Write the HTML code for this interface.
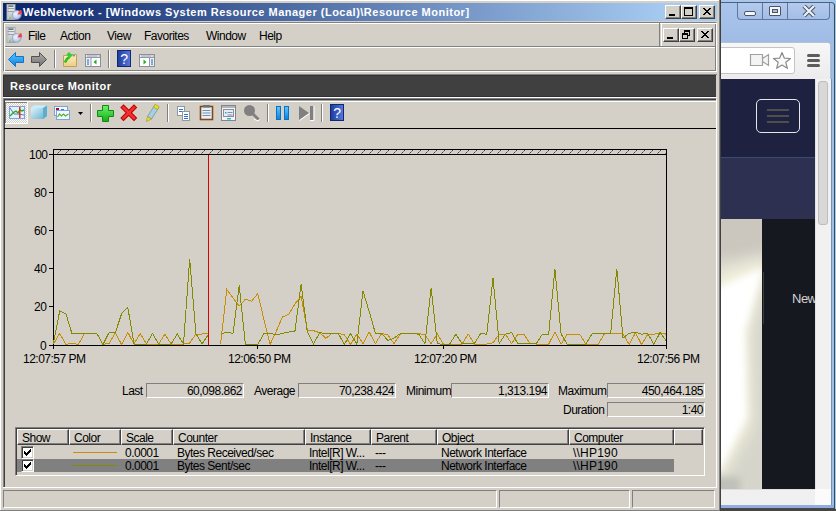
<!DOCTYPE html>
<html><head><meta charset="utf-8">
<style>
*{box-sizing:border-box}
html,body{margin:0;padding:0}
body{width:836px;height:511px;overflow:hidden;position:relative;background:#d4d0c8;font-family:"Liberation Sans",sans-serif;font-size:12px;letter-spacing:-0.5px;color:#000}
.a{position:absolute}
.t{position:absolute;white-space:nowrap;line-height:13px;margin-top:1px}
.cb{position:absolute;width:16px;height:14px;background:#d4d0c8;border-top:1px solid #fff;border-left:1px solid #fff;border-right:1px solid #404040;border-bottom:1px solid #404040;box-shadow:inset -1px -1px 0 #808080}
.sep{position:absolute;width:2px;border-left:1px solid #808080;border-right:1px solid #fff}
.box{position:absolute;height:15px;border-top:1px solid #808080;border-left:1px solid #808080;border-right:1px solid #fff;border-bottom:1px solid #fff;text-align:right;padding-right:1px;line-height:14px}
.hd{position:absolute;top:429px;height:16px;border-top:1px solid #fff;border-left:1px solid #fff;border-right:1px solid #404040;border-bottom:1px solid #404040;box-shadow:inset -1px -1px 0 #808080;padding-left:4px;line-height:17px}
.chk{position:absolute;width:13px;height:13px;background:#fff;border-top:1px solid #808080;border-left:1px solid #808080;border-right:1px solid #fff;border-bottom:1px solid #fff;box-shadow:inset 1px 1px 0 #404040,inset -1px -1px 0 #d4d0c8}
</style></head><body>

<!-- ===== MMC window frame ===== -->
<div class="a" style="left:0;top:0;width:719px;height:1px;background:#fff"></div>
<div class="a" style="left:0;top:0;width:1px;height:510px;background:#fff"></div>
<div class="a" style="left:719px;top:0;width:1px;height:511px;background:#808080"></div>
<div class="a" style="left:0;top:510px;width:719px;height:1px;background:#808080"></div>

<!-- title bar -->
<div class="a" style="left:3px;top:3px;width:714px;height:18px;background:linear-gradient(to right,#0a246a,#a6caf0 93%)"></div>
<div class="t" style="left:23px;top:5px;color:#fff;font-weight:bold;font-size:11px;letter-spacing:0.5px">WebNetwork - [Windows System Resource Manager (Local)\Resource Monitor]</div>
<div class="cb" style="left:665px;top:5px"></div>
<div class="cb" style="left:681px;top:5px"></div>
<div class="cb" style="left:699px;top:5px"></div>

<!-- menu + toolbar etched box -->
<div class="a" style="left:3px;top:22px;width:714px;height:50px;border-top:1px solid #808080;border-left:1px solid #808080;border-right:1px solid #fff;border-bottom:1px solid #fff;box-shadow:inset 1px 1px 0 #fff,inset -1px -1px 0 #808080"></div>
<div class="a" style="left:5px;top:46px;width:710px;height:2px;border-top:1px solid #808080;border-bottom:1px solid #fff"></div>

<div class="t" style="left:28px;top:29px">File</div>
<div class="t" style="left:60px;top:29px">Action</div>
<div class="t" style="left:107px;top:29px">View</div>
<div class="t" style="left:144px;top:29px">Favorites</div>
<div class="t" style="left:206px;top:29px">Window</div>
<div class="t" style="left:259px;top:29px">Help</div>

<div class="a" style="left:659px;top:23px;width:1px;height:23px;background:#808080"></div>
<div class="a" style="left:661px;top:23px;width:1px;height:23px;background:#fff"></div>
<div class="cb" style="left:663px;top:28px"></div>
<div class="cb" style="left:679px;top:28px"></div>
<div class="cb" style="left:697px;top:28px"></div>

<div class="sep" style="left:54px;top:50px;height:18px"></div>
<div class="sep" style="left:108px;top:50px;height:18px"></div>

<!-- dark band -->
<div class="a" style="left:3px;top:74px;width:714px;height:1px;background:#808080"></div>
<div class="a" style="left:3px;top:75px;width:713px;height:22px;background:#404040;border-top:1px solid #343434;border-bottom:1px solid #303030;border-left:1px solid #303030"></div>
<div class="t" style="left:10px;top:79px;color:#fff;font-weight:bold;font-size:11px;letter-spacing:0.5px">Resource Monitor</div>
<div class="a" style="left:3px;top:97px;width:714px;height:1px;background:#fff"></div>

<!-- toolbar2 -->
<div class="a" style="left:3px;top:98px;width:713px;height:1px;background:#808080"></div>
<div class="a" style="left:3px;top:99px;width:713px;height:1px;background:#404040"></div>
<div class="a" style="left:3px;top:100px;width:713px;height:1px;background:#a0a0a0"></div>
<div class="a" style="left:3px;top:101px;width:713px;height:1px;background:#fff"></div>
<div class="sep" style="left:90px;top:104px;height:18px"></div>
<div class="sep" style="left:167px;top:104px;height:18px"></div>
<div class="sep" style="left:267px;top:104px;height:18px"></div>
<div class="sep" style="left:321px;top:104px;height:18px"></div>

<!-- chart panel -->
<div class="a" style="left:3px;top:99px;width:1px;height:389px;background:#808080"></div>
<div class="a" style="left:4px;top:99px;width:1px;height:388px;background:#404040"></div>
<div class="a" style="left:4px;top:128px;width:712px;height:1px;background:#000"></div>
<div class="a" style="left:716px;top:99px;width:1px;height:389px;background:#fff"></div>
<div class="a" style="left:3px;top:487px;width:714px;height:1px;background:#fff"></div>

<!-- chart svg -->
<svg class="a" style="left:0;top:0" width="836" height="511">
<defs><pattern id="hatch" width="8" height="4" patternUnits="userSpaceOnUse" x="1" y="150"><rect x="3" y="0" width="1" height="1" fill="#404040"/><rect x="2" y="1" width="1" height="1" fill="#808080"/><rect x="1" y="2" width="1" height="1" fill="#404040"/><rect x="0" y="3" width="1" height="1" fill="#808080"/></pattern></defs>
<rect x="54" y="150" width="612" height="4" fill="url(#hatch)" shape-rendering="crispEdges"/>
<g shape-rendering="crispEdges">
<rect x="53" y="149" width="614" height="1" fill="#000"/>
<rect x="53" y="154" width="614" height="1" fill="#000"/>
<rect x="53" y="149" width="1" height="197" fill="#000"/>
<rect x="666" y="149" width="1" height="197" fill="#000"/>
<rect x="49" y="345" width="618" height="1" fill="#000"/>
<rect x="49" y="154" width="4" height="1" fill="#000"/>
<rect x="49" y="192" width="4" height="1" fill="#000"/>
<rect x="49" y="230" width="4" height="1" fill="#000"/>
<rect x="49" y="268" width="4" height="1" fill="#000"/>
<rect x="49" y="306" width="4" height="1" fill="#000"/>
<rect x="53" y="346" width="1" height="3" fill="#000"/>
<rect x="257" y="346" width="1" height="3" fill="#000"/>
<rect x="443" y="346" width="1" height="3" fill="#000"/>
<rect x="666" y="346" width="1" height="3" fill="#000"/>
</g>
<polyline fill="none" stroke="#c98e08" stroke-width="1" shape-rendering="crispEdges" points="53.5,344.0 59.7,333.3 65.9,344.5 72.1,343.2 78.3,344.5 84.5,333.4 90.6,333.4 96.8,333.4 103.0,344.5 109.2,343.2 115.4,332.8 121.6,344.5 127.8,332.3 134.0,344.0 140.2,333.5 146.4,344.0 152.5,344.0 158.7,344.0 164.9,334.0 171.1,344.0 177.3,344.0 183.5,344.0 189.7,343.0 195.9,334.0 202.1,334.0 208.2,333.2"/>
<polyline fill="none" stroke="#c98e08" stroke-width="1" shape-rendering="crispEdges" points="220.6,343.7 226.8,289.6 233.0,298.0 239.2,306.0 245.4,299.2 251.6,301.2 257.8,293.7 264.0,319.7 270.1,344.4 276.3,331.0 282.5,317.0 288.7,314.2 294.9,304.0 301.1,296.4 307.3,330.0 313.5,330.7 319.7,332.7 325.9,338.2 332.1,333.4 338.2,333.4 344.4,334.8 350.6,344.4 356.8,334.1 363.0,343.7 369.2,332.0 375.4,343.7 381.6,333.4 387.8,334.8 394.0,343.7 400.1,334.1 406.3,333.4 412.5,333.4 418.7,333.4 424.9,334.8 431.1,343.7 437.3,334.1 443.5,344.4 449.7,344.0 455.9,344.0 462.0,344.0 468.2,334.0 474.4,344.0 480.6,344.0 486.8,344.0 493.0,342.8 499.2,334.2 505.4,334.2 511.6,343.6 517.8,334.2 523.9,334.2 530.1,343.6 536.3,344.0 542.5,344.0 548.7,344.0 554.9,332.2 561.1,344.2 567.3,334.0 573.5,334.0 579.6,334.0 585.8,344.2 592.0,344.2 598.2,344.2 604.4,334.0 610.6,333.0 616.8,333.0 623.0,334.0 629.2,344.5 635.4,332.8 641.6,344.5 647.7,334.2 653.9,334.2 660.1,332.8 666.3,334.2"/>
<polyline fill="none" stroke="#848a00" stroke-width="1" shape-rendering="crispEdges" points="53.5,343.0 59.7,311.0 65.9,313.7 72.1,334.0 78.3,333.4 84.5,333.4 90.6,333.4 96.8,333.4 103.0,344.5 109.2,332.3 115.4,332.5 121.6,313.7 127.8,307.3 134.0,344.0 140.2,344.0 146.4,344.0 152.5,333.5 158.7,344.0 164.9,344.0 171.1,344.0 177.3,334.0 183.5,344.0 189.7,259.0 195.9,333.5 202.1,344.0 208.2,334.8"/>
<polyline fill="none" stroke="#848a00" stroke-width="1" shape-rendering="crispEdges" points="220.6,334.5 226.8,332.0 233.0,333.4 239.2,285.5 245.4,344.4 251.6,344.4 257.8,344.4 264.0,333.4 270.1,333.4 276.3,334.8 282.5,333.4 288.7,332.0 294.9,331.4 301.1,284.1 307.3,332.0 313.5,343.7 319.7,332.7 325.9,333.4 332.1,333.4 338.2,333.4 344.4,344.4 350.6,333.4 356.8,344.4 363.0,291.0 369.2,311.5 375.4,333.4 381.6,333.4 387.8,340.3 394.0,338.2 400.1,333.7 406.3,333.7 412.5,333.7 418.7,334.1 424.9,343.7 431.1,288.2 437.3,343.7 443.5,344.4 449.7,344.0 455.9,334.2 462.0,343.6 468.2,344.0 474.4,343.6 480.6,333.4 486.8,334.2 493.0,277.8 499.2,343.6 505.4,334.2 511.6,332.6 517.8,343.6 523.9,343.6 530.1,343.6 536.3,343.6 542.5,334.0 548.7,334.0 554.9,268.8 561.1,334.0 567.3,344.2 573.5,344.2 579.6,344.2 585.8,344.2 592.0,334.0 598.2,333.0 604.4,333.0 610.6,334.0 616.8,268.8 623.0,338.0 629.2,333.3 635.4,332.3 641.6,334.2 647.7,333.3 653.9,344.5 660.1,332.3 666.3,341.1"/>
<rect x="208" y="155" width="1" height="190" fill="#e00000" shape-rendering="crispEdges"/>
</svg>
<div class="t" style="left:29px;top:148px">100</div>
<div class="t" style="left:34px;top:186px">80</div>
<div class="t" style="left:34px;top:224px">60</div>
<div class="t" style="left:34px;top:262px">40</div>
<div class="t" style="left:34px;top:300px">20</div>
<div class="t" style="left:40px;top:339px">0</div>
<div class="t" style="left:23px;top:352px">12:07:57 PM</div>
<div class="t" style="left:228px;top:352px">12:06:50 PM</div>
<div class="t" style="left:414px;top:352px">12:07:20 PM</div>
<div class="t" style="left:637px;top:352px">12:07:56 PM</div>

<!-- stats -->
<div class="t" style="left:122px;top:384px">Last</div>
<div class="box" style="left:146px;top:383px;width:98px">60,098.862</div>
<div class="t" style="left:254px;top:384px">Average</div>
<div class="box" style="left:298px;top:383px;width:98px">70,238.424</div>
<div class="t" style="left:406px;top:384px">Minimum</div>
<div class="box" style="left:451px;top:383px;width:98px">1,313.194</div>
<div class="t" style="left:558px;top:384px">Maximum</div>
<div class="box" style="left:607px;top:383px;width:98px">450,464.185</div>
<div class="t" style="left:563px;top:403px">Duration</div>
<div class="box" style="left:607px;top:402px;width:98px">1:40</div>

<!-- list view -->
<div class="a" style="left:15px;top:427px;width:690px;height:49px;border-top:1px solid #808080;border-left:1px solid #808080;border-right:1px solid #fff;border-bottom:1px solid #fff;box-shadow:inset 1px 1px 0 #404040,inset -1px -1px 0 #d4d0c8"></div>
<div class="hd" style="left:17px;width:52px">Show</div>
<div class="hd" style="left:69px;width:52px">Color</div>
<div class="hd" style="left:121px;width:52px">Scale</div>
<div class="hd" style="left:173px;width:132px">Counter</div>
<div class="hd" style="left:305px;width:66px">Instance</div>
<div class="hd" style="left:371px;width:66px">Parent</div>
<div class="hd" style="left:437px;width:132px">Object</div>
<div class="hd" style="left:569px;width:105px">Computer</div>
<div class="hd" style="left:674px;width:29px"></div>
<div class="a" style="left:17px;top:459px;width:657px;height:13px;background:#808080"></div>
<div class="chk" style="left:21px;top:446px"></div>
<div class="chk" style="left:21px;top:459px"></div>
<div class="a" style="left:73px;top:452px;width:44px;height:1px;background:#c98e08"></div>
<div class="a" style="left:73px;top:465px;width:44px;height:1px;background:#848a00"></div>
<div class="t" style="left:125px;top:446px">0.0001</div>
<div class="t" style="left:177px;top:446px">Bytes Received/sec</div>
<div class="t" style="left:309px;top:446px">Intel[R] W...</div>
<div class="t" style="left:375px;top:446px">---</div>
<div class="t" style="left:441px;top:446px">Network Interface</div>
<div class="t" style="left:573px;top:446px;letter-spacing:0.2px">\\HP190</div>
<div class="t" style="left:125px;top:459px">0.0001</div>
<div class="t" style="left:177px;top:459px">Bytes Sent/sec</div>
<div class="t" style="left:309px;top:459px">Intel[R] W...</div>
<div class="t" style="left:375px;top:459px">---</div>
<div class="t" style="left:441px;top:459px">Network Interface</div>
<div class="t" style="left:573px;top:459px;letter-spacing:0.2px">\\HP190</div>

<!-- status bar -->
<div class="a" style="left:3px;top:490px;width:494px;height:18px;border-top:1px solid #808080;border-left:1px solid #808080;border-right:1px solid #fff;border-bottom:1px solid #fff"></div>
<div class="a" style="left:499px;top:490px;width:131px;height:18px;border-top:1px solid #808080;border-left:1px solid #808080;border-right:1px solid #fff;border-bottom:1px solid #fff"></div>
<div class="a" style="left:632px;top:490px;width:83px;height:18px;border-top:1px solid #808080;border-left:1px solid #808080;border-right:1px solid #fff;border-bottom:1px solid #fff"></div>

<svg class="a" style="left:0;top:0" width="836" height="511"><g shape-rendering="crispEdges">
<rect x="669" y="14" width="6" height="1" fill="#000"/><rect x="669" y="15" width="6" height="1" fill="#000"/>
<rect x="684" y="7" width="9" height="1" fill="#000"/><rect x="684" y="8" width="9" height="1" fill="#000"/><rect x="684" y="9" width="1" height="1" fill="#000"/><rect x="692" y="9" width="1" height="1" fill="#000"/><rect x="684" y="10" width="1" height="1" fill="#000"/><rect x="692" y="10" width="1" height="1" fill="#000"/><rect x="684" y="11" width="1" height="1" fill="#000"/><rect x="692" y="11" width="1" height="1" fill="#000"/><rect x="684" y="12" width="1" height="1" fill="#000"/><rect x="692" y="12" width="1" height="1" fill="#000"/><rect x="684" y="13" width="1" height="1" fill="#000"/><rect x="692" y="13" width="1" height="1" fill="#000"/><rect x="684" y="14" width="1" height="1" fill="#000"/><rect x="692" y="14" width="1" height="1" fill="#000"/><rect x="684" y="15" width="9" height="1" fill="#000"/>
<rect x="703" y="8" width="2" height="1" fill="#000"/><rect x="709" y="8" width="2" height="1" fill="#000"/><rect x="704" y="9" width="2" height="1" fill="#000"/><rect x="708" y="9" width="2" height="1" fill="#000"/><rect x="705" y="10" width="4" height="1" fill="#000"/><rect x="706" y="11" width="2" height="1" fill="#000"/><rect x="705" y="12" width="4" height="1" fill="#000"/><rect x="704" y="13" width="2" height="1" fill="#000"/><rect x="708" y="13" width="2" height="1" fill="#000"/><rect x="703" y="14" width="2" height="1" fill="#000"/><rect x="709" y="14" width="2" height="1" fill="#000"/>
<rect x="667" y="37" width="6" height="1" fill="#000"/><rect x="667" y="38" width="6" height="1" fill="#000"/>
<rect x="684" y="30" width="6" height="1" fill="#000"/><rect x="684" y="31" width="6" height="1" fill="#000"/><rect x="684" y="32" width="1" height="1" fill="#000"/><rect x="689" y="32" width="1" height="1" fill="#000"/><rect x="682" y="33" width="6" height="1" fill="#000"/><rect x="689" y="33" width="1" height="1" fill="#000"/><rect x="682" y="34" width="6" height="1" fill="#000"/><rect x="689" y="34" width="1" height="1" fill="#000"/><rect x="682" y="35" width="1" height="1" fill="#000"/><rect x="687" y="35" width="3" height="1" fill="#000"/><rect x="682" y="36" width="1" height="1" fill="#000"/><rect x="687" y="36" width="1" height="1" fill="#000"/><rect x="682" y="37" width="1" height="1" fill="#000"/><rect x="687" y="37" width="1" height="1" fill="#000"/><rect x="682" y="38" width="6" height="1" fill="#000"/>
<rect x="701" y="31" width="2" height="1" fill="#000"/><rect x="707" y="31" width="2" height="1" fill="#000"/><rect x="702" y="32" width="2" height="1" fill="#000"/><rect x="706" y="32" width="2" height="1" fill="#000"/><rect x="703" y="33" width="4" height="1" fill="#000"/><rect x="704" y="34" width="2" height="1" fill="#000"/><rect x="703" y="35" width="4" height="1" fill="#000"/><rect x="702" y="36" width="2" height="1" fill="#000"/><rect x="706" y="36" width="2" height="1" fill="#000"/><rect x="701" y="37" width="2" height="1" fill="#000"/><rect x="707" y="37" width="2" height="1" fill="#000"/>
<rect x="30" y="449" width="1" height="1" fill="#000"/><rect x="29" y="450" width="2" height="1" fill="#000"/><rect x="24" y="451" width="1" height="1" fill="#000"/><rect x="28" y="451" width="3" height="1" fill="#000"/><rect x="24" y="452" width="2" height="1" fill="#000"/><rect x="27" y="452" width="3" height="1" fill="#000"/><rect x="24" y="453" width="5" height="1" fill="#000"/><rect x="25" y="454" width="3" height="1" fill="#000"/><rect x="26" y="455" width="1" height="1" fill="#000"/>
<rect x="30" y="462" width="1" height="1" fill="#000"/><rect x="29" y="463" width="2" height="1" fill="#000"/><rect x="24" y="464" width="1" height="1" fill="#000"/><rect x="28" y="464" width="3" height="1" fill="#000"/><rect x="24" y="465" width="2" height="1" fill="#000"/><rect x="27" y="465" width="3" height="1" fill="#000"/><rect x="24" y="466" width="5" height="1" fill="#000"/><rect x="25" y="467" width="3" height="1" fill="#000"/><rect x="26" y="468" width="1" height="1" fill="#000"/>
</g>
<defs>
<linearGradient id="srvg" x1="0" y1="0" x2="0" y2="1"><stop offset="0" stop-color="#f4f6f8"/><stop offset="0.5" stop-color="#d8dce0"/><stop offset="1" stop-color="#a8b0b8"/></linearGradient>
<radialGradient id="dskg" cx="0.4" cy="0.4" r="0.7"><stop offset="0" stop-color="#f0f4fc"/><stop offset="0.6" stop-color="#c4d0ea"/><stop offset="1" stop-color="#98a8d0"/></radialGradient><linearGradient id="pieg" x1="0" y1="0" x2="1" y2="1"><stop offset="0" stop-color="#ffb020"/><stop offset="0.5" stop-color="#f04040"/><stop offset="1" stop-color="#e040c0"/></linearGradient>
<linearGradient id="blug" x1="0" y1="0" x2="0" y2="1"><stop offset="0" stop-color="#5cc8ff"/><stop offset="1" stop-color="#0a80e0"/></linearGradient>
<linearGradient id="gryg" x1="0" y1="0" x2="0" y2="1"><stop offset="0" stop-color="#b0b0b0"/><stop offset="1" stop-color="#707070"/></linearGradient>
<linearGradient id="hlpg" x1="0" y1="0" x2="1" y2="0"><stop offset="0" stop-color="#1c3c9c"/><stop offset="1" stop-color="#5878e0"/></linearGradient>
<linearGradient id="grng" x1="0" y1="0" x2="0" y2="1"><stop offset="0" stop-color="#70f070"/><stop offset="1" stop-color="#10b010"/></linearGradient>
<linearGradient id="cubg" x1="0" y1="0" x2="1" y2="1"><stop offset="0" stop-color="#e8f8ff"/><stop offset="1" stop-color="#60b0d0"/></linearGradient>
</defs>
<g transform="translate(4,4)">
<rect x="3" y="0.5" width="8" height="15" fill="url(#srvg)" stroke="#a0a6ae" stroke-width="1"/>
<rect x="3.5" y="1" width="1.5" height="14" fill="#c8ccd2"/>
<rect x="4.5" y="1.5" width="5" height="1.2" fill="#2c5058"/>
<rect x="3.5" y="4" width="7" height="1" fill="#9aa0a8"/>
<rect x="3.5" y="7" width="7" height="1" fill="#9aa0a8"/>
<rect x="5" y="13.5" width="1.3" height="1.3" fill="#30e030"/>
<circle cx="12.7" cy="10.9" r="4.4" fill="url(#dskg)" stroke="#90a0c4" stroke-width="0.8"/>
<path d="M13.4,10.6 L16,6 L17.6,6.6 L18.2,10.2 Z" fill="url(#pieg)"/>
</g>
<g transform="translate(4,27)">
<rect x="3" y="0.5" width="8" height="15" fill="url(#srvg)" stroke="#a0a6ae" stroke-width="1"/>
<rect x="3.5" y="1" width="1.5" height="14" fill="#c8ccd2"/>
<rect x="4.5" y="1.5" width="5" height="1.2" fill="#2c5058"/>
<rect x="3.5" y="4" width="7" height="1" fill="#9aa0a8"/>
<rect x="3.5" y="7" width="7" height="1" fill="#9aa0a8"/>
<rect x="5" y="13.5" width="1.3" height="1.3" fill="#30e030"/>
<circle cx="12.7" cy="10.9" r="4.4" fill="url(#dskg)" stroke="#90a0c4" stroke-width="0.8"/>
<path d="M13.4,10.6 L16,6 L17.6,6.6 L18.2,10.2 Z" fill="url(#pieg)"/>
</g>
<path d="M8.5,59.5 L15.5,52.5 L15.5,56.5 L23.5,56.5 L23.5,62.5 L15.5,62.5 L15.5,66.5 Z" fill="url(#blug)" stroke="#1870c8" stroke-width="1" stroke-linejoin="miter"/>
<path d="M46.5,59.5 L39.5,52.5 L39.5,56.5 L31.5,56.5 L31.5,62.5 L39.5,62.5 L39.5,66.5 Z" fill="url(#gryg)" stroke="#505050" stroke-width="1"/>
<linearGradient id="fldg" x1="0" y1="0" x2="0" y2="1"><stop offset="0" stop-color="#fcecc0"/><stop offset="1" stop-color="#ecd080"/></linearGradient>
<path d="M63.5,55.5 L67.5,55.5 L68.5,54.5 L76.5,54.5 L76.5,66.5 L63.5,66.5 Z" fill="url(#fldg)" stroke="#c8a050" stroke-width="1"/>
<rect x="64" y="57.5" width="12" height="1" fill="#f8e4a8"/>
<ellipse cx="73.8" cy="55.7" rx="1.4" ry="0.8" fill="#4090e0"/>
<path d="M65,62.5 C66,59.5 67.5,58 69.5,57" fill="none" stroke="#28c028" stroke-width="2.6"/>
<path d="M66.5,54.5 L69,52 L72.5,55.5 L70,58 Z" fill="#30d030"/>
<rect x="85.5" y="54.5" width="15" height="12" fill="#fff" stroke="#8890a0"/><rect x="86" y="55" width="14" height="2.5" fill="#f0f2f4"/><rect x="87" y="55.5" width="10" height="1" fill="#9098a8"/><rect x="97.5" y="55.5" width="1" height="1" fill="#9098a8"/><rect x="99" y="55.5" width="1" height="1" fill="#9098a8"/><rect x="86" y="57" width="14" height="1" fill="#9098a8"/><rect x="86" y="58" width="5" height="8" fill="#f0f0f0"/><rect x="90.5" y="58" width="1" height="8" fill="#9098a8"/><rect x="87" y="59.5" width="2" height="1.2" fill="#3878d0"/><rect x="87" y="61.5" width="2" height="1.2" fill="#3878d0"/><rect x="87" y="63.5" width="2" height="1.2" fill="#3878d0"/><path d="M96.5,59.5 L93.5,62 L96.5,64.5 Z" fill="#20b020"/>
<rect x="139.5" y="54.5" width="15" height="12" fill="#fff" stroke="#8890a0"/><rect x="140" y="55" width="14" height="2.5" fill="#f0f2f4"/><rect x="141" y="55.5" width="10" height="1" fill="#9098a8"/><rect x="151.5" y="55.5" width="1" height="1" fill="#9098a8"/><rect x="153" y="55.5" width="1" height="1" fill="#9098a8"/><rect x="140" y="57" width="14" height="1" fill="#9098a8"/><rect x="149" y="58" width="5" height="8" fill="#f0f0f0"/><rect x="149" y="58" width="1" height="8" fill="#9098a8"/><rect x="151" y="59.5" width="2" height="1.2" fill="#3878d0"/><rect x="151" y="61.5" width="2" height="1.2" fill="#3878d0"/><rect x="151" y="63.5" width="2" height="1.2" fill="#3878d0"/><path d="M143.5,59.5 L146.5,62 L143.5,64.5 Z" fill="#20b020"/>
<rect x="117.5" y="50.5" width="13" height="16" fill="url(#hlpg)" stroke="#102870"/>
<text x="124" y="63.5" font-family="Liberation Sans" font-size="14" fill="#fff" text-anchor="middle">?</text>
<rect x="330.5" y="104.5" width="13" height="16" fill="url(#hlpg)" stroke="#102870"/>
<text x="337" y="117.5" font-family="Liberation Sans" font-size="14" fill="#fff" text-anchor="middle">?</text>
<pattern id="dith" width="2" height="2" patternUnits="userSpaceOnUse"><rect width="2" height="2" fill="#d4d0c8"/><rect width="1" height="1" fill="#fff"/><rect x="1" y="1" width="1" height="1" fill="#fff"/></pattern>
<rect x="5" y="102" width="23" height="22" fill="url(#dith)" shape-rendering="crispEdges"/>
<rect x="5" y="102" width="22" height="1" fill="#808080" shape-rendering="crispEdges"/>
<rect x="5" y="102" width="1" height="21" fill="#808080" shape-rendering="crispEdges"/>
<rect x="5" y="123" width="23" height="1" fill="#fff" shape-rendering="crispEdges"/>
<rect x="27" y="102" width="1" height="22" fill="#fff" shape-rendering="crispEdges"/>
<rect x="9.5" y="106.5" width="15" height="12" fill="#e4f0fc" stroke="#7ca4dc"/>
<polyline points="10,108 14,114 18,114 24,115" fill="none" stroke="#5878d0" stroke-width="1"/>
<polyline points="10,116 12,114 14,112 16,111 18,113 20,110 22,111 24,110" fill="none" stroke="#20b020" stroke-width="1.4"/>
<rect x="19" y="107" width="1.5" height="11" fill="#e03020"/>
<path d="M31,108 L34,105.5 L47,105.5 L47,116 L43,119 L31,119 Z" fill="url(#cubg)"/>
<path d="M31,108 L34,105.5 L47,105.5 L43,108 Z" fill="#c8ecfc"/>
<path d="M43,108 L47,105.5 L47,116 L43,119 Z" fill="#5aaed0"/>
<rect x="54.5" y="106.5" width="13" height="9" fill="#f4f8fc" stroke="#7ca4dc"/>
<rect x="56" y="108" width="3" height="2" fill="#a01020"/><rect x="61" y="109" width="3" height="1.5" fill="#4070e0"/>
<rect x="56.5" y="110.5" width="13" height="9" fill="#f4f8fc" stroke="#7ca4dc"/>
<polyline points="57.5,117 59.5,114 61.5,116 63.5,114 65.5,116 68.5,114" fill="none" stroke="#50b030" stroke-width="1.2"/>
<path d="M78,112 L83,112 L80.5,115 Z" fill="#000"/>
<path d="M102.5,105.5 H108.5 V110.5 H113.5 V116.5 H108.5 V121.5 H102.5 V116.5 H97.5 V110.5 H102.5 Z" fill="url(#grng)" stroke="#108a10"/>
<path d="M123.5,107.5 L134,118 M134,107.5 L123.5,118" stroke="#c00000" stroke-width="4.6" stroke-linecap="square"/><path d="M123.5,107.5 L134,118 M134,107.5 L123.5,118" stroke="#f03030" stroke-width="2.6" stroke-linecap="square"/>
<path d="M147.5,116.5 L154.5,105.5 L158.5,108 L151.5,119 Z" fill="#a8d0dc" stroke="#6898a8" stroke-width="0.8"/>
<path d="M153.5,107 L155.2,104.3 L159.2,106.8 L157.5,109.5 Z" fill="#e8e020" stroke="#a09010" stroke-width="0.6"/>
<path d="M147.5,116.5 L151.5,119 L146.5,121.5 Z" fill="#e8e020" stroke="#a09010" stroke-width="0.6"/>
<rect x="177.5" y="106.5" width="7" height="9" fill="#fff" stroke="#9098a0"/>
<rect x="179" y="109" width="4" height="1" fill="#3070d0"/><rect x="179" y="111" width="4" height="1" fill="#3070d0"/>
<rect x="182.5" y="111.5" width="7" height="9" fill="#fff" stroke="#9098a0"/>
<rect x="184" y="114" width="4" height="1" fill="#3070d0"/><rect x="184" y="116" width="4" height="1" fill="#3070d0"/><rect x="184" y="118" width="4" height="1" fill="#3070d0"/>
<rect x="200.5" y="106.5" width="12" height="13" fill="#e8f0f8" stroke="#804818" stroke-width="1.6"/>
<rect x="203" y="105" width="7" height="2.5" fill="#707070"/>
<rect x="202.5" y="110" width="8" height="1" fill="#7090b0"/><rect x="202.5" y="112.5" width="8" height="1" fill="#7090b0"/><rect x="202.5" y="115" width="8" height="1" fill="#7090b0"/>
<rect x="221.5" y="105.5" width="14" height="15" fill="#f4f4f4" stroke="#80848c"/>
<rect x="222" y="106" width="13" height="2" fill="#b0b4bc"/>
<rect x="223.5" y="109.5" width="10" height="7" fill="#e8ecf4" stroke="#8890a0"/>
<rect x="225" y="112" width="1.5" height="1.5" fill="#30a0f0"/><rect x="227.5" y="112" width="5" height="1" fill="#8090a8"/><rect x="227.5" y="114.5" width="5" height="1" fill="#8090a8"/>
<rect x="227" y="118" width="4" height="1.5" fill="#30b0f0"/>
<circle cx="249.5" cy="110.5" r="5.5" fill="#808080"/><path d="M252,113 L258.5,119.5" stroke="#808080" stroke-width="3"/><path d="M254,119 L258,121 L259.5,119.5" fill="none" stroke="#fff" stroke-width="1"/>
<rect x="276.5" y="106.5" width="4" height="13" fill="url(#blug)" stroke="#1070c0"/><rect x="284.5" y="106.5" width="4" height="13" fill="url(#blug)" stroke="#1070c0"/>
<path d="M299,106 L309,113 L299,120 Z" fill="#808080"/><rect x="310" y="106" width="3.5" height="14" fill="#808080"/><path d="M299.5,120.5 L309.5,113.5 M310,120.5 H314 V106" fill="none" stroke="#fff" stroke-width="1"/>
</svg>
<!-- ===== Chrome window ===== -->
<div class="a" style="left:720px;top:0;width:116px;height:511px;overflow:hidden;background:#a8c6ee">
 <div class="a" style="left:-20px;top:2px;width:135px;height:507px;background:linear-gradient(#aac5ec,#9ab7e2 60px,#95b2df);border-top:1px solid #4e5f78;border-right:1px solid #404850;border-bottom:1px solid #404850;border-radius:0 4px 0 0"></div>
 <div class="a" style="left:111px;top:79px;width:1px;height:427px;background:#7890b8"></div>
 <div class="a" style="left:112px;top:9px;width:2px;height:499px;background:#a4bce8"></div>
 <div class="a" style="left:115px;top:0;width:1px;height:511px;background:#98d0e8"></div>
 <!-- caption buttons -->
 <div class="a" style="left:17px;top:3px;width:93px;height:17px;border:1px solid #60779c;border-top:none;border-radius:0 0 4px 4px;background:linear-gradient(#b4cbee,#a3bde6)"></div>
 <div class="a" style="left:42px;top:3px;width:1px;height:16px;background:#60779c"></div>
 <div class="a" style="left:67px;top:3px;width:1px;height:16px;background:#60779c"></div>
 <div class="a" style="left:24px;top:11px;width:12px;height:5px;background:#f4f6fa;border:1px solid #4a5568;border-radius:2px"></div>
 <div class="a" style="left:49px;top:6px;width:12px;height:10px;background:#f4f6fa;border:1px solid #4a5568;border-radius:1px"></div>
 <div class="a" style="left:52px;top:9px;width:6px;height:4px;background:#a8bfe4;border:1px solid #4a5568"></div>
 <svg class="a" style="left:82px;top:5px" width="14" height="12"><path d="M2,1 L12,11 M12,1 L2,11" stroke="#4a5568" stroke-width="4.2" stroke-linecap="butt"/><path d="M2,1 L12,11 M12,1 L2,11" stroke="#eef2f8" stroke-width="2.2"/></svg>
 <!-- toolbar -->
 <div class="a" style="left:-10px;top:42px;width:121px;height:37px;background:linear-gradient(#f7f7f7,#ececec);border-top:1px solid #b4c0d4;border-right:1px solid #b4c0d4;border-radius:0 3px 0 0"></div>
 <div class="a" style="left:-20px;top:47px;width:95px;height:27px;background:#fff;border:1px solid #c4c4c4;border-radius:3px"></div>
 <svg class="a" style="left:29px;top:52px" width="22" height="16"><path d="M1.5,2.5 H13.5 V13.5 H1.5 Z M13.5,6.5 L19.5,2.5 V13.5 L13.5,9.5" fill="#f4f4f4" stroke="#a0a0a0" stroke-width="1.2"/></svg>
 <svg class="a" style="left:52px;top:51px" width="20" height="19"><path d="M10,1.5 L12.4,7.2 L18.5,7.5 L13.8,11.3 L15.4,17.3 L10,14 L4.6,17.3 L6.2,11.3 L1.5,7.5 L7.6,7.2 Z" fill="#fafafa" stroke="#8a8a8a" stroke-width="1.2" stroke-linejoin="round"/></svg>
 <div class="a" style="left:87px;top:54px;width:13px;height:3px;background:#5c5c5c;border-radius:1.5px"></div>
 <div class="a" style="left:87px;top:59px;width:13px;height:3px;background:#5c5c5c;border-radius:1.5px"></div>
 <div class="a" style="left:87px;top:64px;width:13px;height:3px;background:#5c5c5c;border-radius:1.5px"></div>
 <!-- page -->
 <div class="a" style="left:0;top:79px;width:95px;height:78px;background:#1e2140"></div>
 <div class="a" style="left:0;top:157px;width:95px;height:1px;background:#3a4a70"></div>
 <div class="a" style="left:0;top:158px;width:95px;height:61px;background:#2e3052"></div>
 <div class="a" style="left:36px;top:99px;width:44px;height:34px;border:1.5px solid #e6e6e6;border-radius:5px"></div>
 <div class="a" style="left:47px;top:109px;width:22px;height:2px;background:#4e4e4e"></div>
 <div class="a" style="left:47px;top:115px;width:22px;height:2px;background:#4e4e4e"></div>
 <div class="a" style="left:47px;top:121px;width:22px;height:2px;background:#4e4e4e"></div>
 <svg class="a" style="left:0;top:219px" width="42" height="270">
<defs><filter id="bl8" x="-50%" y="-50%" width="200%" height="200%"><feGaussianBlur stdDeviation="8"/></filter><filter id="bl4" x="-50%" y="-50%" width="200%" height="200%"><feGaussianBlur stdDeviation="3.5"/></filter></defs>
<rect width="42" height="270" fill="#d6d5cb"/>
<rect x="-10" y="-10" width="62" height="50" fill="#cbc6be" filter="url(#bl8)"/>
<polygon points="-10,55 52,35 30,111 32,205 0,262 -10,262" fill="#f1f0dc" filter="url(#bl8)"/>
<polygon points="-10,72 44,48 25,112 27,198 0,252 -10,252" fill="#ffffff" filter="url(#bl4)"/>
<rect x="-10" y="258" width="30" height="20" fill="#bfc1b8" filter="url(#bl4)"/>
</svg>
  <div class="a" style="left:42px;top:219px;width:53px;height:270px;background:#161820"></div>
 <div class="a" style="left:43px;top:272px;width:1px;height:52px;background:#3a3c44"></div>
 <div class="t" style="left:72px;top:291px;color:#d2d2d2;font-size:13px">News</div>
 <!-- scrollbar -->
 <div class="a" style="left:95px;top:79px;width:16px;height:410px;background:#f1f1f1;border-left:1px solid #e2e2e2"></div>
 <div class="a" style="left:98px;top:81px;width:10px;height:144px;background:#d8d8d8;border:1px solid #bdbdbd;border-radius:3px"></div>
 <div class="a" style="left:0;top:489px;width:111px;height:16px;background:#f0f0f0;border-top:1px solid #e0e0e0"></div>
 <div class="a" style="left:95px;top:489px;width:16px;height:16px;background:#fbfbfb"></div>
 <div class="a" style="left:0;top:505px;width:114px;height:3px;background:#90ace0"></div>
 <div class="a" style="left:0;top:509px;width:116px;height:2px;background:#4a443e"></div>
</div>
<div class="a" style="left:720px;top:0;width:1px;height:511px;background:#404040"></div>
</body></html>
